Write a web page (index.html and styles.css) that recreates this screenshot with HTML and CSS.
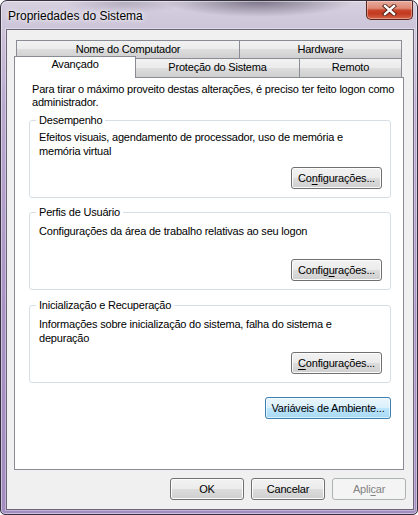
FILE: index.html
```html
<!DOCTYPE html>
<html lang="pt-BR">
<head>
<meta charset="utf-8">
<title>Propriedades do Sistema</title>
<link rel="stylesheet" href="styles.css">
</head>
<body>
<div class="window">
  <div class="titlebar">
    <span class="title">Propriedades do Sistema</span>
    <div class="close">
      <svg width="15" height="12" viewBox="0 0 15 12">
        <path d="M3 2 L12 10 M12 2 L3 10" stroke="#4b1c12" stroke-width="4.2" stroke-linecap="square" fill="none"/>
        <path d="M3 2 L12 10 M12 2 L3 10" stroke="#ffffff" stroke-width="2.4" stroke-linecap="square" fill="none"/>
      </svg>
    </div>
  </div>
  <div class="client">
    <div class="tabs">
      <div class="tabrow back">
        <div class="tab t-nome">Nome do Computador</div>
        <div class="tab t-hw">Hardware</div>
      </div>
      <div class="tabrow front">
        <div class="tab selected t-av">Avançado</div>
        <div class="tab t-prot">Proteção do Sistema</div>
        <div class="tab t-rem">Remoto</div>
      </div>
    </div>
    <div class="panel">
      <p class="intro">Para tirar o máximo proveito destas alterações, é preciso ter feito logon como<br>administrador.</p>
      <div class="group g1">
        <span class="group-label">Desempenho</span>
        <p class="group-text">Efeitos visuais, agendamento de processador, uso de memória e<br>memória virtual</p>
        <button class="btn cfg">Co<u>n</u>figurações...</button>
      </div>
      <div class="group g2">
        <span class="group-label">Perfis de Usuário</span>
        <p class="group-text lower">Configurações da área de trabalho relativas ao seu logon</p>
        <button class="btn cfg">Config<u>u</u>rações...</button>
      </div>
      <div class="group g3">
        <span class="group-label">Inicialização e Recuperação</span>
        <p class="group-text lower">Informações sobre inicialização do sistema, falha do sistema e<br>depuração</p>
        <button class="btn cfg"><u>C</u>onfigurações...</button>
      </div>
      <button class="btn hot env">Variáveis de Ambiente...</button>
    </div>
    <div class="footer">
      <button class="btn foot">OK</button>
      <button class="btn foot">Cancelar</button>
      <button class="btn foot disabled">Apli<u>c</u>ar</button>
    </div>
  </div>
</div>
</body>
</html>
```
FILE: styles.css
```css
* { box-sizing: border-box; }

html, body {
  margin: 0;
  padding: 0;
}

body {
  width: 418px;
  height: 515px;
  overflow: hidden;
  background: #ffffff;
  font-family: "Liberation Sans", Arial, sans-serif;
  font-size: 11px;
  letter-spacing: -0.2px;
  color: #000000;
}

.window {
  width: 418px;
  height: 515px;
  border: 1px solid #36313f;
  border-radius: 7px 7px 5px 5px;
  padding: 0 3px 4px 5px;
  display: flex;
  flex-direction: column;
  background:
    radial-gradient(ellipse 95px 16px at 62% 0, rgba(92, 84, 104, 0.75), rgba(92, 84, 104, 0) 100%),
    radial-gradient(ellipse 60px 10px at 30% 2px, rgba(120, 112, 132, 0.35), rgba(120, 112, 132, 0) 100%),
    linear-gradient(180deg, #d6d0df 0%, #cdc5d9 5%, #b9aad0 20%, #a993c5 60%, #a28cc0 100%);
  box-shadow: inset 0 0 0 1px rgba(255, 255, 255, 0.45);
}

.titlebar {
  height: 28px;
  flex: none;
  display: flex;
  align-items: flex-start;
}

.title {
  align-self: center;
  margin: 1px 0 0 2px;
  font-size: 12px;
  letter-spacing: 0;
  color: #000000;
  text-shadow: 0 0 6px rgba(255, 255, 255, 0.9), 0 0 3px rgba(255, 255, 255, 0.8);
}

.close {
  margin-left: auto;
  margin-right: 1px;
  width: 47px;
  height: 19px;
  border: 1px solid #5a261d;
  border-top: none;
  border-radius: 0 0 5px 5px;
  background: linear-gradient(180deg, #e7aa9c 0%, #dd8a76 40%, #c8452a 52%, #c23a20 70%, #d4654a 100%);
  box-shadow: inset 0 0 0 1px rgba(255, 220, 210, 0.45);
  display: flex;
  align-items: center;
  justify-content: center;
}

.client {
  flex: 1;
  background: #f0f0f0;
  border: 1px solid #6c6478;
  box-shadow: 0 0 0 1px rgba(255, 255, 255, 0.35);
  display: flex;
  flex-direction: column;
}

.tabs {
  flex: none;
  margin: 10px 0 0 7px;
  width: 390px;
}

.tabrow {
  display: flex;
}

.tabrow.back {
  padding: 0 2px;
  height: 18px;
}

.tabrow.front {
  height: 19px;
  align-items: flex-end;
}

.tab {
  border: 1px solid #898c95;
  border-bottom: none;
  background: linear-gradient(180deg, #f2f2f2 0%, #ebebeb 50%, #dddddd 50%, #cfcfcf 100%);
  text-align: center;
  margin-left: -1px;
  white-space: nowrap;
}

.tab:first-child {
  margin-left: 0;
}

.t-nome { width: 224px; height: 18px; line-height: 17px; }
.t-hw { width: 163px; height: 18px; line-height: 17px; }

.t-prot { width: 165px; height: 19px; line-height: 16px; }
.t-rem { width: 103px; height: 19px; line-height: 16px; }

.tab.selected {
  width: 122px;
  height: 22px;
  line-height: 14px;
  margin-bottom: -1px;
  background: #ffffff;
  position: relative;
  z-index: 2;
}

.panel {
  flex: none;
  margin-left: 7px;
  width: 390px;
  height: 393px;
  background: #ffffff;
  border: 1px solid #898c95;
  padding: 5px 12px 0 14px;
  display: flex;
  flex-direction: column;
}

.intro {
  margin: 0;
  padding-left: 3px;
  line-height: 13px;
  white-space: nowrap;
}

.group {
  height: 78px;
  margin-top: 14px;
  border: 1px solid #d5dfe5;
  border-radius: 3px;
  padding: 0 8px 8px 8px;
  display: flex;
  flex-direction: column;
  align-items: flex-start;
}

.g1 { margin-top: 11px; }
.g3 { margin-top: 15px; }

.group-label {
  margin: -7px 0 0 -2px;
  padding: 0 3px;
  background: #ffffff;
  line-height: 13px;
  white-space: nowrap;
}

.group-text {
  margin: 3px 0 0 1px;
  line-height: 14px;
  white-space: nowrap;
}

.group-text.lower {
  margin-top: 5px;
}

.btn {
  height: 22px;
  padding: 0;
  border: 1px solid #707070;
  border-radius: 3px;
  background: linear-gradient(180deg, #f2f2f2 0%, #ebebeb 50%, #dddddd 50%, #cfcfcf 100%);
  box-shadow: inset 0 0 0 1px #fcfcfc;
  font-family: inherit;
  font-size: 11px;
  letter-spacing: -0.2px;
  color: #000000;
  text-align: center;
  white-space: nowrap;
}

.btn u {
  text-decoration-thickness: 1px;
  text-underline-offset: 2px;
}

.cfg {
  width: 91px;
  margin-top: auto;
  align-self: flex-end;
}

.btn.hot {
  border-color: #3c7fb1;
  background: linear-gradient(180deg, #eaf6fd 0%, #d9f0fc 50%, #bee6fd 50%, #a7d9f5 100%);
  box-shadow: inset 0 0 0 1px rgba(255, 255, 255, 0.6);
}

.env {
  width: 126px;
  margin-top: 14px;
  align-self: flex-end;
}

.footer {
  flex: none;
  display: flex;
  justify-content: flex-end;
  gap: 7px;
  margin-top: 8px;
  padding-right: 7px;
}

.foot {
  width: 74px;
}

.btn.disabled {
  border-color: #adb2b5;
  background: #f4f4f4;
  box-shadow: none;
  color: #838383;
}
```
